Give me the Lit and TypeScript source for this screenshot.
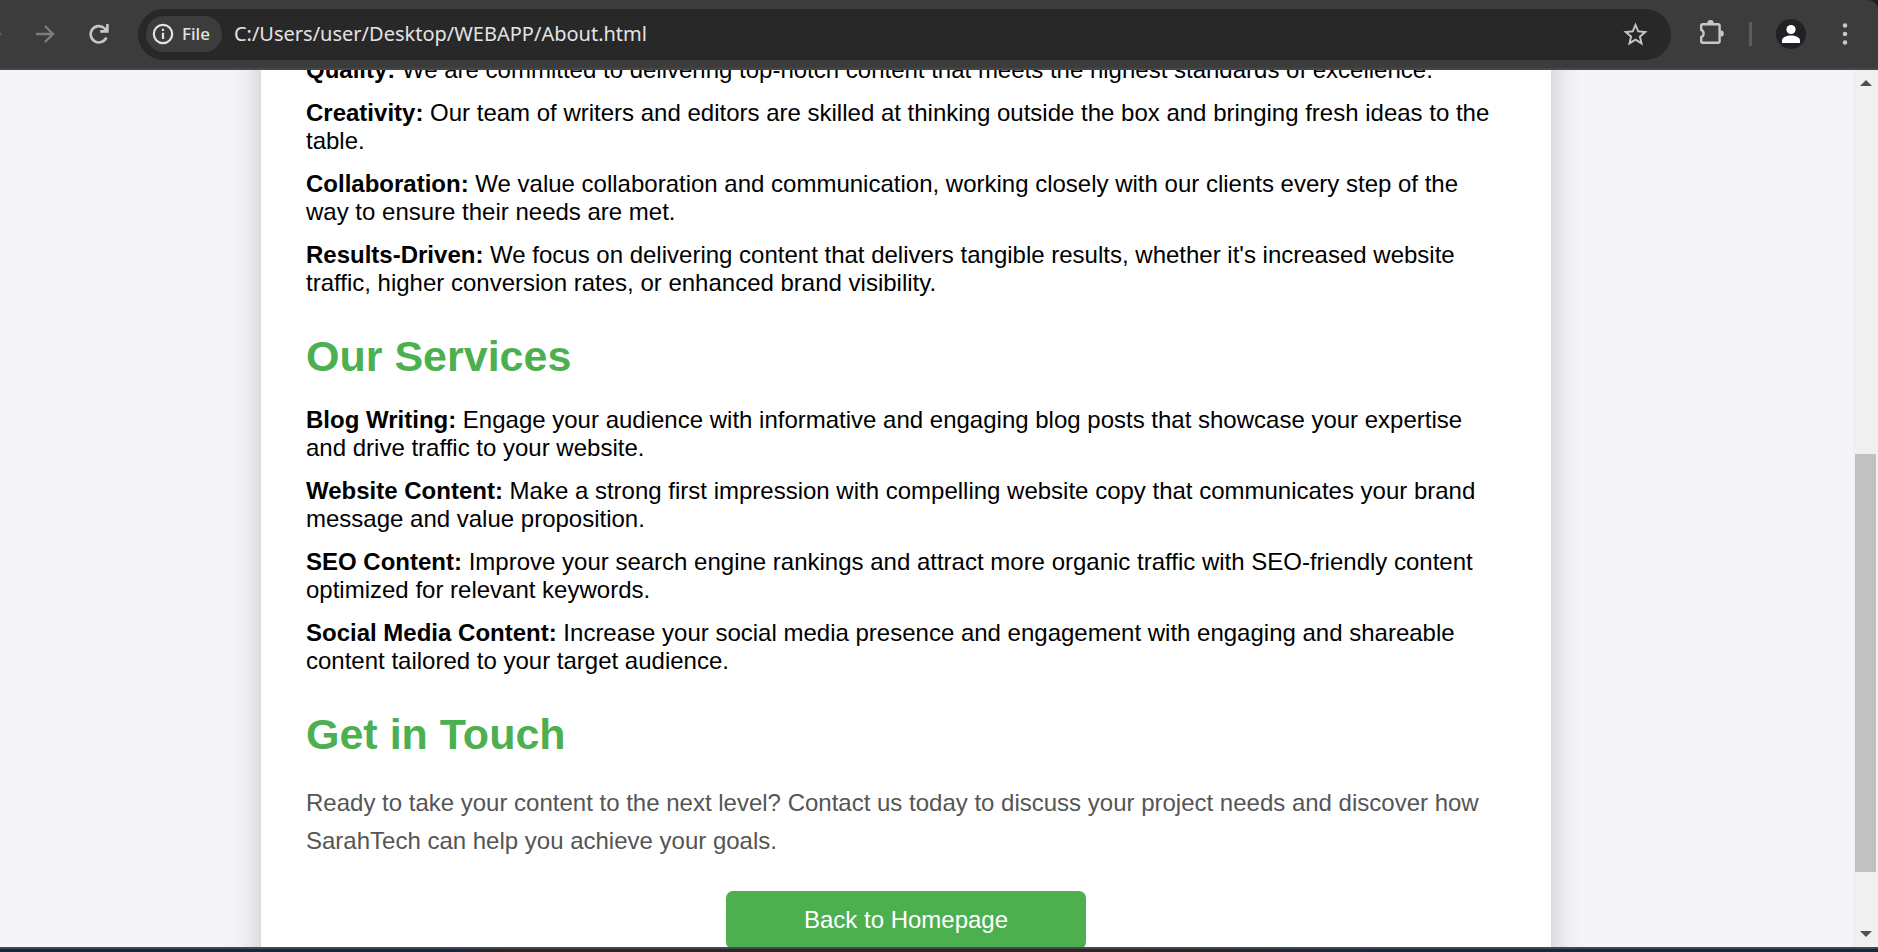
import { LitElement, html, css, svg } from "lit";
import { customElement, query } from "lit/decorators.js";

interface Entry {
  term: string;
  text: string;
}

const VALUES: Entry[] = [
  { term: "Quality:", text: "We are committed to delivering top-notch content that meets the highest standards of excellence." },
  { term: "Creativity:", text: "Our team of writers and editors are skilled at thinking outside the box and bringing fresh ideas to the table." },
  { term: "Collaboration:", text: "We value collaboration and communication, working closely with our clients every step of the way to ensure their needs are met." },
  { term: "Results-Driven:", text: "We focus on delivering content that delivers tangible results, whether it's increased website traffic, higher conversion rates, or enhanced brand visibility." },
];

const SERVICES: Entry[] = [
  { term: "Blog Writing:", text: "Engage your audience with informative and engaging blog posts that showcase your expertise and drive traffic to your website." },
  { term: "Website Content:", text: "Make a strong first impression with compelling website copy that communicates your brand message and value proposition." },
  { term: "SEO Content:", text: "Improve your search engine rankings and attract more organic traffic with SEO-friendly content optimized for relevant keywords." },
  { term: "Social Media Content:", text: "Increase your social media presence and engagement with engaging and shareable content tailored to your target audience." },
];

@customElement("browser-toolbar")
export class BrowserToolbar extends LitElement {
  static styles = css`
    :host {
      display: flex;
      align-items: center;
      height: 68px;
      background: #3c3c3c;
      border-bottom: 2px solid #474747;
      border-top-right-radius: 10px;
      font-family: "Noto Sans", sans-serif;
      overflow: hidden;
    }
    svg {
      display: block;
    }
    button {
      display: flex;
      align-items: center;
      justify-content: center;
      flex: none;
      border: 0;
      padding: 0;
      background: none;
      color: #c7c7c7;
      font: inherit;
    }
    .back {
      width: 2px;
      color: #5c5c5c;
    }
    .nav {
      width: 54px;
      height: 54px;
    }
    .forward {
      margin-left: 16px;
      color: #7d7d7d;
    }
    .omnibox {
      display: flex;
      align-items: center;
      flex: 1;
      min-width: 0;
      height: 51px;
      margin-left: 12px;
      padding: 0 21px 0 8px;
      box-sizing: border-box;
      border-radius: 26px;
      background: #282828;
    }
    .chip {
      gap: 8px;
      height: 36px;
      padding: 0 12px 0 6px;
      border-radius: 18px;
      background: #3c3c3c;
      color: #e3e3e3;
      font-size: 17px;
      font-weight: 500;
    }
    .address {
      flex: 1;
      min-width: 0;
      margin-left: 12px;
      padding: 0;
      border: 0;
      outline: 0;
      background: none;
      color: #e3e3e3;
      font: 20px/28px "Noto Sans", sans-serif;
    }
    .extensions {
      margin-left: 26px;
    }
    .divider {
      flex: none;
      width: 3px;
      height: 24px;
      margin-left: 24px;
      background: #5c5c5c;
    }
    .profile {
      margin-left: 24px;
    }
    .menu {
      width: 24px;
      margin: 0 21px 0 27px;
    }
  `;

  render() {
    return html`
      <button class="back" aria-label="Back">
        <svg width="2" height="4" viewBox="0 0 2 4" fill="currentColor"><path d="M0 0L2 2L0 4Z" /></svg>
      </button>
      <button class="nav forward" aria-label="Forward">
        <svg width="20" height="20" viewBox="0 0 20 20" fill="none" stroke="currentColor" stroke-width="2.4">
          <path d="M1 10H18M10 2l8 8-8 8" />
        </svg>
      </button>
      <button class="nav" aria-label="Reload">
        <svg width="22" height="22" viewBox="0 0 22 22" fill="none" stroke="currentColor" stroke-width="2.6">
          <path d="M18.4 14.6A8.2 8.2 0 1 1 16.6 5.4L19 8" />
          <path d="M19.4 1V8.4H12.2" />
        </svg>
      </button>
      <div class="omnibox">
        <button class="chip">
          <svg width="22" height="22" viewBox="0 0 22 22" fill="none" stroke="currentColor" stroke-width="2.2">
            <circle cx="11" cy="11" r="9.2" />
            <path d="M11 9.8V16M11 5.8V8" />
          </svg>
          File
        </button>
        <input class="address" aria-label="Address" value="C:/Users/user/Desktop/WEBAPP/About.html" spellcheck="false" />
        <button aria-label="Bookmark this page">
          <svg width="29" height="29" viewBox="0 0 24 24" fill="currentColor">
            <path d="M22 9.24l-7.19-.62L12 2 9.19 8.63 2 9.24l5.46 4.73L5.82 21 12 17.27 18.18 21l-1.63-7.03L22 9.24zM12 15.4l-3.76 2.27 1-4.28-3.32-2.88 4.38-.38L12 6.1l1.71 4.04 4.38.38-3.32 2.88 1 4.28L12 15.4z" />
          </svg>
        </button>
      </div>
      <button class="extensions" aria-label="Extensions">
        <svg width="28" height="28" viewBox="0 0 28 28">
          <path d="M5.5 4.2H21.2a1.400 1.400 0 0 1 1.400 1.400V21.400a1.400 1.400 0 0 1-1.400 1.400H5.500A1.400 1.400 0 0 1 4.200 21.400V17a3.900 3.900 0 0 0 0-7.200V5.600A1.400 1.400 0 0 1 5.500 4.200Z" fill="none" stroke="currentColor" stroke-width="2.400" />
          <path d="M10.300 3.500a3.200 3.400 0 0 1 6.400 0ZM23.400 10.200a3.400 3.200 0 0 1 0 6.400Z" fill="currentColor" />
        </svg>
      </button>
      <span class="divider"></span>
      <button class="profile" aria-label="Profile">
        <svg width="30" height="30" viewBox="0 0 30 30">
          <circle cx="15" cy="15" r="15" fill="#202124" />
          <circle cx="15" cy="10.500" r="4.600" fill="#fff" />
          <path d="M6 24v-2.500c0-3.200 5-5 9-5s9 1.800 9 5V24Z" fill="#fff" />
        </svg>
      </button>
      <button class="menu" aria-label="Menu">
        <svg width="6" height="22" viewBox="0 0 6 22" fill="currentColor">
          ${[2.5, 11, 19.5].map((y) => svg`<circle cx="3" cy=${y} r="2.3" />`)}
        </svg>
      </button>
    `;
  }
}

@customElement("page-scrollbar")
export class PageScrollbar extends LitElement {
  static styles = css`
    :host {
      display: flex;
      flex-direction: column;
      flex: none;
      width: 25px;
      background: #f0f0f0;
    }
    .arrow {
      display: flex;
      align-items: center;
      justify-content: center;
      height: 26px;
      border: 0;
      padding: 0;
      background: none;
    }
    .track {
      display: flex;
      flex-direction: column;
      flex: 1;
      padding: 0 2px;
    }
    .before {
      flex: 358;
    }
    .thumb {
      flex: 418;
      background: #c1c1c1;
    }
    .after {
      flex: 49;
    }
  `;

  render() {
    return html`
      <button class="arrow" aria-label="Scroll up">
        <svg width="12" height="6" viewBox="0 0 12 6"><path d="M0 6L6 0l6 6Z" fill="#505050" /></svg>
      </button>
      <div class="track">
        <span class="before"></span>
        <span class="thumb"></span>
        <span class="after"></span>
      </div>
      <button class="arrow" aria-label="Scroll down">
        <svg width="12" height="6" viewBox="0 0 12 6"><path d="M0 0h12L6 6Z" fill="#505050" /></svg>
      </button>
    `;
  }
}

@customElement("app-root")
export class AppRoot extends LitElement {
  static styles = css`
    :host {
      display: flex;
      flex-direction: column;
      height: 100vh;
      overflow: hidden;
      background: #202020;
      font-family: "Liberation Sans", Arial, sans-serif;
      font-size: 24px;
      line-height: 28px;
      color: #000;
    }
    .window {
      display: flex;
      flex: 1;
      min-height: 0;
    }
    .viewport {
      flex: 1;
      min-width: 0;
      overflow-y: scroll;
      scrollbar-width: none;
      background: #f4f4f9;
      padding: 0 41px 0 0;
    }
    .card {
      max-width: 1200px;
      margin: 0 auto 30px;
      padding: 45px;
      background: #fff;
      box-shadow: 0 0 30px rgba(0, 0, 0, 0.2);
    }
    .list {
      list-style: none;
      margin: 0;
      padding: 0;
    }
    .item {
      margin-bottom: 15px;
    }
    .heading {
      margin: 35px 0 25px;
      font-size: 43px;
      line-height: 49px;
      color: #4caf50;
    }
    .text {
      margin: 0;
      line-height: 38px;
      color: #555;
    }
    .back {
      display: block;
      width: 360px;
      margin: 31px auto 0;
      padding: 15px 0;
      border-radius: 7px;
      background: #4caf50;
      color: #fff;
      text-align: center;
      text-decoration: none;
    }
    .taskbar {
      flex: none;
      height: 3px;
      border-top: 2px solid #404a55;
      background: linear-gradient(90deg, #14273f 0, #14273f 24%, #33241f 27%, #33241f 60%, #14273f 74%);
    }
  `;

  @query(".viewport") private viewport!: HTMLElement;

  firstUpdated() {
    this.viewport.scrollTop = 59;
  }

  private list(entries: Entry[]) {
    return html`
      <ul class="list">
        ${entries.map((e) => html`<li class="item"><strong>${e.term}</strong> ${e.text}</li>`)}
      </ul>
    `;
  }

  render() {
    return html`
      <browser-toolbar></browser-toolbar>
      <div class="window">
        <main class="viewport">
          <article class="card">
            ${this.list(VALUES)}
            <h2 class="heading">Our Services</h2>
            ${this.list(SERVICES)}
            <h2 class="heading">Get in Touch</h2>
            <p class="text">
              Ready to take your content to the next level? Contact us today to discuss your project needs and discover
              how SarahTech can help you achieve your goals.
            </p>
            <a class="back" href="index.html">Back to Homepage</a>
          </article>
        </main>
        <page-scrollbar></page-scrollbar>
      </div>
      <div class="taskbar"></div>
    `;
  }
}
